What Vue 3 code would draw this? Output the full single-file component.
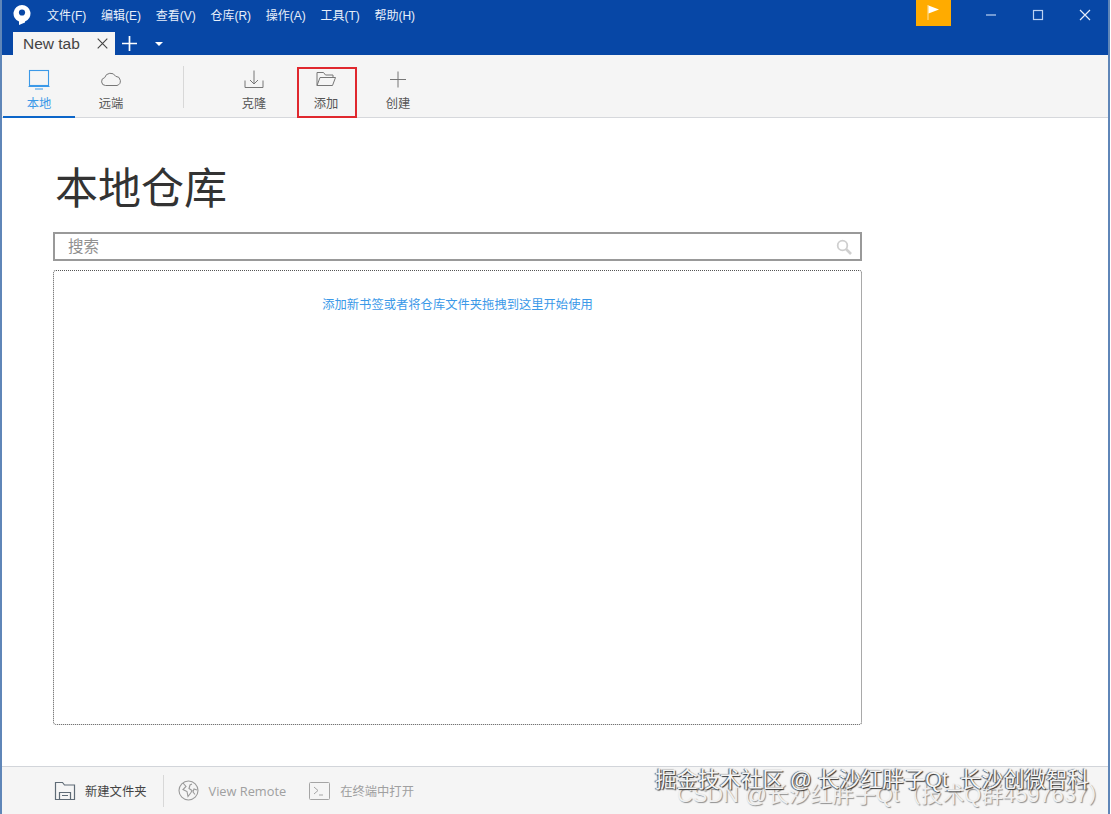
<script setup>
const menus = ['文件(F)', '编辑(E)', '查看(V)', '仓库(R)', '操作(A)', '工具(T)', '帮助(H)'];
</script>

<template>
	<div class="window">
		<header class="titlebar">
			<div class="titlebar__top">
				<svg class="logo" width="18" height="20" viewBox="0 0 18 20">
					<path d="M9 0a8.500 8.500 0 0 1 3 16.450V17.500L6 20v-3.550A8.500 8.500 0 0 1 9 0z" fill="#fff" />
					<circle cx="9" cy="7.500" r="3.100" fill="#0747a6" />
				</svg>
				<nav class="menu">
					<span v-for="item in menus" :key="item">{{ item }}</span>
				</nav>
				<div class="flag">
					<svg width="14" height="16" viewBox="0 0 14 16">
						<path d="M1 1v15" stroke="#ffe2a0" stroke-width="1" />
						<path d="M1.500 1.500l10.500 4-10.500 4z" fill="#fff" />
					</svg>
				</div>
				<div class="winctl">
					<svg width="12" height="12" viewBox="0 0 12 12"><path d="M1 6h10" stroke="#bcd2f2" stroke-width="1.200" /></svg>
					<svg width="12" height="12" viewBox="0 0 12 12"><rect x="1.500" y="1.500" width="9" height="9" fill="none" stroke="#bcd2f2" stroke-width="1.200" /></svg>
					<svg width="12" height="12" viewBox="0 0 12 12"><path d="M1 1l10 10M11 1L1 11" stroke="#e4edfa" stroke-width="1.200" /></svg>
				</div>
			</div>
			<div class="tabs">
				<div class="tab">
					<span>New tab</span>
					<svg width="11" height="11" viewBox="0 0 11 11"><path d="M.7.7l9.600 9.600M10.300.7L.7 10.300" stroke="#444" stroke-width="1.100" /></svg>
				</div>
				<svg class="tabs__add" width="15" height="15" viewBox="0 0 15 15"><path d="M7.500 0v15M0 7.500h15" stroke="#fff" stroke-width="1.700" /></svg>
				<span class="tabs__more"></span>
			</div>
		</header>

		<div class="toolbar">
			<button class="tool tool--active">
				<svg width="24" height="22" viewBox="0 0 24 22" fill="none" stroke="#3b99e8" stroke-width="1.100">
					<rect x="2.500" y="1.500" width="19" height="15" />
					<path d="M1.500 17.500h21M8 20h8" />
				</svg>
				<span>本地</span>
			</button>
			<button class="tool">
				<svg width="24" height="22" viewBox="0 0 24 22" fill="none" stroke="#777" stroke-width="1">
					<path d="M6.500 16.500a4 4 0 0 1-.8-7.900 6 6 0 0 1 11-1.300 4.700 4.700 0 0 1 1.300 9.200z" />
				</svg>
				<span>远端</span>
			</button>
			<i class="toolbar__sep"></i>
			<button class="tool">
				<svg width="24" height="22" viewBox="0 0 24 22" fill="none" stroke="#777" stroke-width="1">
					<path d="M12 1.500v13M8 11l4 4 4-4M3 11.500v7h18v-7" />
				</svg>
				<span>克隆</span>
			</button>
			<button class="tool tool--marked">
				<svg width="24" height="22" viewBox="0 0 24 22" fill="none" stroke="#777" stroke-width="1">
					<path d="M3 16.500V3.500h6.500l2 2.500H19v2.500M3 16.500h15.500l3-8H6z" />
				</svg>
				<span>添加</span>
			</button>
			<button class="tool">
				<svg width="24" height="22" viewBox="0 0 24 22" fill="none" stroke="#777" stroke-width="1">
					<path d="M12 2.500v16M4 10.500h16" />
				</svg>
				<span>创建</span>
			</button>
		</div>

		<main class="content">
			<h1>本地仓库</h1>
			<div class="search">
				<span>搜索</span>
				<svg width="16" height="16" viewBox="0 0 16 16" fill="none" stroke="#cfcfcf">
					<circle cx="6.500" cy="6.500" r="4.800" stroke-width="1.800" />
					<path d="M10 10l5 5" stroke-width="2.600" />
				</svg>
			</div>
			<div class="bookmarks">添加新书签或者将仓库文件夹拖拽到这里开始使用</div>
		</main>

		<footer class="footer">
			<button class="action">
				<svg width="22" height="20" viewBox="0 0 22 20" fill="none" stroke="#5f6b76" stroke-width="1.200">
					<path d="M1.500 18.500V1.500h7l2 2.500h10v14.500z" />
					<path d="M5.500 18.500v-7h11v7M8 14.500h6" />
				</svg>
				<span>新建文件夹</span>
			</button>
			<i class="footer__sep"></i>
			<button class="action action--off">
				<svg width="21" height="21" viewBox="0 0 21 21" fill="none" stroke="#9a9a9a" stroke-width="1.100">
					<circle cx="10.500" cy="10.500" r="9.500" />
					<path d="M5 3l3 3.500-3 3 4 2 1 5 3-4 1-2-3-2 1-3.500 2-1M19 10l-3-1-1 3 2 2.500" />
				</svg>
				<span class="latin">View Remote</span>
			</button>
			<button class="action action--off">
				<svg width="21" height="20" viewBox="0 0 21 20" fill="none" stroke="#a5a5a5" stroke-width="1">
					<rect x=".5" y="1.500" width="20" height="17" rx="1" />
					<path d="M5 6l4 3.500L5 13M10 14h4" />
				</svg>
				<span>在终端中打开</span>
			</button>
		</footer>

		<div class="mark mark--csdn">CSDN @长沙红胖子Qt（技术Q群4597637）</div>
		<div class="mark mark--juejin">掘金技术社区 @ 长沙红胖子Qt_长沙创微智科</div>
	</div>
</template>

<style scoped>
.window {
	position: relative;
	width: 1110px;
	height: 814px;
	display: flex;
	flex-direction: column;
	box-sizing: border-box;
	border-left: 2px solid #5f86b8;
	border-right: 2px solid #5f86b8;
	background: #fff;
	overflow: hidden;
	font-family: "Liberation Sans", "Noto Sans CJK SC", sans-serif;
	color: #444;
}

.titlebar {
	height: 55px;
	flex: none;
	background: #0747a6;
	color: #fff;
}

.titlebar__top {
	height: 32px;
	display: flex;
	align-items: flex-start;
}

.logo {
	margin: 5px 0 0 11px;
}

.menu {
	display: flex;
	gap: 14.700px;
	margin: 8px 0 0 16px;
	font-size: 12px;
	line-height: 16px;
	color: #e8effa;
}

.flag {
	width: 35px;
	height: 26px;
	margin-left: auto;
	background: #ffab00;
	display: flex;
	justify-content: center;
	padding-top: 4px;
	box-sizing: border-box;
}

.winctl {
	display: flex;
	gap: 35px;
	margin: 9px 17px 0 34px;
}

.tabs {
	display: flex;
	align-items: center;
	height: 23px;
}

.tab {
	width: 102px;
	height: 23px;
	margin-left: 11px;
	padding: 0 7px 0 10px;
	box-sizing: border-box;
	background: #f5f5f5;
	color: #444;
	font-size: 15.500px;
	display: flex;
	align-items: center;
	justify-content: space-between;
}

.tabs__add {
	margin-left: 7px;
}

.tabs__more {
	margin-left: 18px;
	border: 4px solid transparent;
	border-top: 4px solid #fff;
	border-bottom: 0;
}

.toolbar {
	height: 63px;
	flex: none;
	display: flex;
	box-sizing: border-box;
	padding-left: 1px;
	background: #f5f5f5;
	border-bottom: 1px solid #d6d8dc;
}

.tool {
	width: 72px;
	height: 63px;
	margin: 0;
	padding: 14px 0 0;
	box-sizing: border-box;
	border: 0;
	background: none;
	display: flex;
	flex-direction: column;
	align-items: center;
	gap: 4px;
	font: inherit;
	font-size: 12.300px;
	line-height: 18px;
	color: #555;
}

.tool--active {
	color: #3b99e8;
	border-bottom: 2px solid #0c66c9;
}

.tool--marked {
	position: relative;
}

.tool--marked::after {
	content: "";
	position: absolute;
	left: 7px;
	top: 12px;
	width: 60px;
	height: 51px;
	box-sizing: border-box;
	border: 2px solid #e0282e;
}

.toolbar__sep {
	width: 1px;
	height: 42px;
	margin: 11px 34px 0 36px;
	background: #d8d8d8;
}

.content {
	flex: 1;
	padding: 0 0 41px 51px;
	display: flex;
	flex-direction: column;
}

h1 {
	margin: 46px 0 0 2px;
	font-size: 43px;
	line-height: 50px;
	font-weight: 400;
	color: #333;
}

.search {
	width: 809px;
	height: 29px;
	margin-top: 18px;
	padding: 0 8px 0 13px;
	box-sizing: border-box;
	border: 2px solid #999;
	display: flex;
	align-items: center;
	justify-content: space-between;
	font-size: 15.500px;
	line-height: 23px;
	color: #909090;
}

.bookmarks {
	width: 809px;
	flex: 1;
	margin-top: 9px;
	padding-top: 26px;
	box-sizing: border-box;
	border: 1px dotted #555;
	border-radius: 3px;
	text-align: center;
	font-size: 12.300px;
	line-height: 16px;
	color: #3b99e8;
}

.footer {
	height: 48px;
	flex: none;
	display: flex;
	align-items: center;
	padding-left: 52px;
	box-sizing: border-box;
	background: #f5f5f5;
	border-top: 1px solid #d2d5da;
}

.action {
	margin: 0;
	padding: 0;
	border: 0;
	background: none;
	display: flex;
	align-items: center;
	gap: 9px;
	font: inherit;
	font-size: 12.300px;
	color: #444;
}

.action--off {
	gap: 10px;
	color: #a0a0a0;
	margin-right: 23px;
}

.latin {
	font-family: "Open Sans", sans-serif;
	font-size: 12.800px;
}

.footer__sep {
	width: 1px;
	height: 32px;
	margin: 0 14px 0 16px;
	background: #d8d8d8;
}

.mark {
	position: absolute;
	white-space: nowrap;
	line-height: 24px;
}

.mark--csdn {
	left: 675px;
	top: 783px;
	font-size: 21.800px;
	color: #efefef;
	text-shadow: 1px 1px 1px #8f8f8f;
}

.mark--juejin {
	left: 653px;
	top: 768px;
	font-size: 21.500px;
	color: #f4f4f4;
	text-shadow: 1px 1px 1px #333, -1px 0 1px #555;
}
</style>

<style>
body {
	margin: 0;
}
</style>
